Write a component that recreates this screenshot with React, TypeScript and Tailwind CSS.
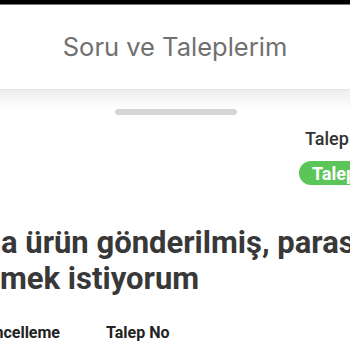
export default function App() {
  return (
    <div className="w-[350px] h-[350px] overflow-hidden bg-white relative" style={{ fontFamily: 'Roboto, "Noto Sans", sans-serif' }}>
      <div className="h-[4px] bg-black" />
      <div className="h-[1px] bg-[#7a7a7a]" />
      <div className="h-[84px] flex items-center justify-center">
        <span className="text-[25.5px] text-[#707070] font-normal" style={{ fontFamily: 'Inter, "Noto Sans", sans-serif' }}>Soru ve Taleplerim</span>
      </div>
      <div className="h-[1px] bg-[#e2e2e2]" />
      <div className="h-[19px] bg-gradient-to-b from-[#eeeeee] to-white" />
      <div className="ml-[115px] w-[122px] h-[6px] rounded-full bg-[#d6d6d6]" />
      <div className="mt-[14px] pl-[305px] whitespace-nowrap text-[18px] leading-[20px] font-medium text-[#333333]">Talep Durumu</div>
      <div className="mt-[12px] ml-[299px] h-[24px] w-[120px] rounded-full bg-[#5bc55a] pl-[13px] flex items-center whitespace-nowrap text-[18px] font-bold text-white">Talep Açık</div>
      <div className="mt-[40px] whitespace-nowrap text-[31px] leading-[36px] font-bold text-[#383838]">
        <div className="pl-[1px]">a ürün gönderilmiş, parasını</div>
        <div>mek istiyorum</div>
      </div>
      <div className="mt-[26px] flex whitespace-nowrap text-[16px] leading-[20px] font-bold text-[#222222]">
        <div className="w-[60px] overflow-hidden flex justify-end">
          <span>Son Güncelleme</span>
        </div>
        <span className="ml-[46px]">Talep No</span>
      </div>
    </div>
  );
}
